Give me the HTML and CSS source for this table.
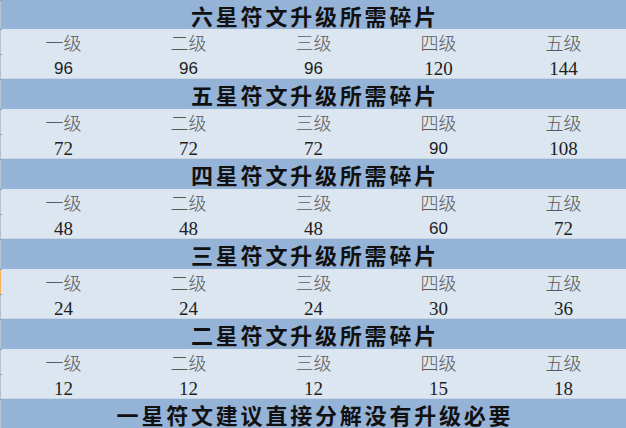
FILE: index.html
```html
<!DOCTYPE html>
<html lang="zh">
<head>
<meta charset="utf-8">
<title>符文升级所需碎片</title>
<link rel="stylesheet" href="styles.css">
</head>
<body>
<div class="sheet">
  <div class="title first">六星符文升级所需碎片</div>
  <div class="row labels"><span>一级</span><span>二级</span><span>三级</span><span>四级</span><span>五级</span></div>
  <div class="row nums"><span class="sans">96</span><span class="sans">96</span><span class="sans">96</span><span>120</span><span>144</span></div>

  <div class="title">五星符文升级所需碎片</div>
  <div class="row labels"><span>一级</span><span>二级</span><span>三级</span><span>四级</span><span>五级</span></div>
  <div class="row nums"><span>72</span><span>72</span><span>72</span><span class="sans">90</span><span>108</span></div>

  <div class="title">四星符文升级所需碎片</div>
  <div class="row labels"><span>一级</span><span>二级</span><span>三级</span><span>四级</span><span>五级</span></div>
  <div class="row nums"><span>48</span><span>48</span><span>48</span><span class="sans">60</span><span>72</span></div>

  <div class="title">三星符文升级所需碎片</div>
  <div class="row labels sel"><span>一级</span><span>二级</span><span>三级</span><span>四级</span><span>五级</span></div>
  <div class="row nums"><span>24</span><span>24</span><span>24</span><span>30</span><span>36</span></div>

  <div class="title">二星符文升级所需碎片</div>
  <div class="row labels"><span>一级</span><span>二级</span><span>三级</span><span>四级</span><span>五级</span></div>
  <div class="row nums"><span>12</span><span>12</span><span>12</span><span>15</span><span>18</span></div>

  <div class="title">一星符文建议直接分解没有升级必要</div>
</div>
</body>
</html>
```

FILE: styles.css
```css
html, body {
  margin: 0;
  padding: 0;
  background: #dce6f1;
  overflow: hidden;
}

.sheet {
  width: 626px;
  display: flex;
  flex-direction: column;
}

.title,
.row {
  position: relative;
  border-left: 1px solid #b4c2d3;
}

.title::before,
.row::before {
  content: "";
  position: absolute;
  left: -1px;
  top: 0;
  width: 2px;
  height: 1px;
  background: #8d9db2;
}

.title {
  height: 30px;
  background: #95b3d7;
  color: #111111;
  font-family: "Noto Sans CJK SC", "Noto Sans", sans-serif;
  font-weight: 700;
  font-size: 22px;
  letter-spacing: 2.8px;
  text-indent: 3px;
  display: flex;
  align-items: center;
  justify-content: center;
  line-height: 1;
}

.title.first {
  height: 29px;
}

.row {
  height: 25px;
  background: #dce6f1;
  display: grid;
  grid-template-columns: repeat(5, 1fr);
  align-items: center;
  justify-items: center;
}

.nums {
  border-bottom: 1px solid #c9d5e3;
  height: 24px;
}

.labels span {
  font-family: "Noto Sans CJK SC", "Noto Sans", sans-serif;
  font-weight: 300;
  font-size: 18px;
  color: #5a5a5a;
  line-height: 1;
  padding-top: 1px;
}

.nums span {
  font-family: "Liberation Serif", serif;
  font-size: 19px;
  color: #1e1e1e;
  line-height: 1;
  padding-top: 4px;
}

.nums span.sans {
  font-family: "Liberation Sans", sans-serif;
  font-size: 17px;
}

.labels.sel {
  border-left-color: #f2b35a;
}
```
